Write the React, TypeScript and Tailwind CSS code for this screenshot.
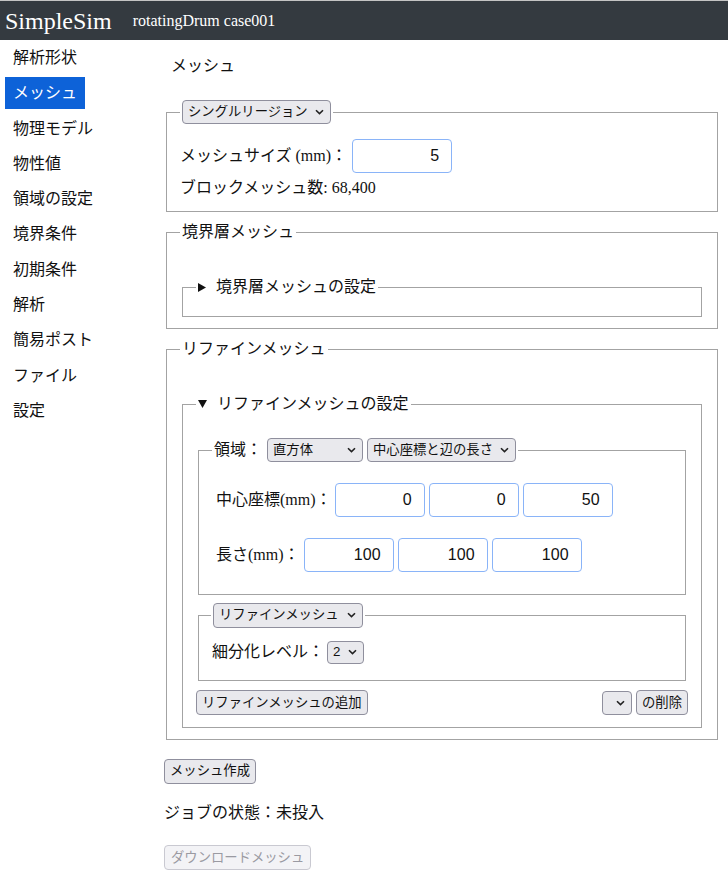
import React from 'react';

const serif = "font-['Liberation_Serif','Noto_Sans_CJK_JP',serif]";
const ctl = "font-['Liberation_Sans','Noto_Sans_CJK_JP',sans-serif] text-[13.33px] text-[#111]";

const navItems = ['解析形状', 'メッシュ', '物理モデル', '物性値', '領域の設定', '境界条件', '初期条件', '解析', '簡易ポスト', 'ファイル', '設定'];

function Chevron() {
  return (
    <svg width="9" height="6" viewBox="0 0 9 6" className="pointer-events-none absolute right-[7px] top-1/2 -translate-y-1/2">
      <path d="M1 1.2 L4.5 4.6 L8 1.2" fill="none" stroke="#222" strokeWidth="1.6" />
    </svg>
  );
}

function Select({ width, value, height = 'h-6' }: { width: string; value: string; height?: string }) {
  return (
    <span className="relative inline-flex align-middle">
      <select
        defaultValue={value}
        className={`${ctl} ${width} ${height} appearance-none rounded-[4px] border border-[#8f8f9d] bg-[#e9e9ed] pl-[5px] pr-5 leading-none outline-none`}
      >
        <option value={value}>{value}</option>
      </select>
      <Chevron />
    </span>
  );
}

function Btn({ children, disabled = false }: { children: React.ReactNode; disabled?: boolean }) {
  return (
    <button
      disabled={disabled}
      className={
        disabled
          ? `${ctl} h-[25px] rounded-[4px] border border-[#c9c9d1] bg-[#f3f3f6] px-[6px] !text-[#9a9aa2]`
          : `${ctl} h-[25px] rounded-[4px] border border-[#8f8f9d] bg-[#e9e9ed] px-[5px]`
      }
    >
      {children}
    </button>
  );
}

function NumInput({ value, width }: { value: string; width: string }) {
  return (
    <input
      readOnly
      value={value}
      className={`${width} h-[34px] rounded-[4px] border border-[#8ab4f8] bg-white pr-3 text-right font-['Liberation_Sans',sans-serif] text-[16px] text-[#111] outline-none`}
    />
  );
}

function Triangle({ open }: { open: boolean }) {
  return open ? (
    <svg width="9" height="8" viewBox="0 0 9 8" className="mr-[10px] inline-block">
      <path d="M0 0 H9 L4.5 8 Z" fill="#111" />
    </svg>
  ) : (
    <svg width="8" height="9" viewBox="0 0 8 9" className="mr-[10px] inline-block">
      <path d="M0 0 V9 L8 4.5 Z" fill="#111" />
    </svg>
  );
}

const fs = 'mx-[2px] border border-[#a3a3a3] px-[13px] pt-0 min-w-0';
const lg = 'px-[2px] h-6 leading-6 flex items-center';

export default function App() {
  return (
    <div className={`${serif} min-h-[883px] w-[728px] bg-white text-[16px] text-[#111]`}>
      {/* header */}
      <div className="flex h-10 items-center border-t border-[#c4c4c4] bg-[#343a40] text-white">
        <span className="ml-[5px] text-[24px] leading-none">SimpleSim</span>
        <span className="ml-[21px] text-[16px] leading-none">rotatingDrum case001</span>
      </div>

      <div className="flex">
        {/* sidebar */}
        <nav className="flex w-[164px] shrink-0 flex-col gap-[3.3px] pt-[2px]">
          {navItems.map((item) => (
            <div key={item} className="h-8 pl-[5px]">
              <span
                className={
                  item === 'メッシュ'
                    ? 'flex h-8 w-20 items-center bg-[#0d62d8] px-2 text-white'
                    : 'flex h-8 items-center px-2'
                }
              >
                {item}
              </span>
            </div>
          ))}
        </nav>

        {/* main */}
        <main className="min-w-0 flex-1 pr-2 pt-[14px]">
          <div className="h-6 pl-[7px] leading-6">メッシュ</div>

          {/* single region */}
          <fieldset className={`${fs} mt-[22px] pb-[11px]`}>
            <legend className={lg}>
              <Select width="w-[149px]" value="シングルリージョン" />
            </legend>
            <div className="mt-[15px] flex h-[34px] items-center gap-[5px]">
              <span>
                メッシュサイズ (mm)：
              </span>
              <NumInput value="5" width="w-[100px]" />
            </div>
            <div className="mt-[3px] h-6 leading-6">ブロックメッシュ数: 68,400</div>
          </fieldset>

          {/* boundary layer */}
          <fieldset className={`${fs} mt-2 pb-[11px]`}>
            <legend className={lg}>境界層メッシュ</legend>
            <fieldset className={`${fs} mt-[31px] pb-[17px]`}>
              <legend className={lg}>
                <Triangle open={false} />
                境界層メッシュの設定
              </legend>
            </fieldset>
          </fieldset>

          {/* refine */}
          <fieldset className={`${fs} mt-2 pb-[11px]`}>
            <legend className={lg}>リファインメッシュ</legend>
            <fieldset className={`${fs} mt-[31px] pb-[12px]`}>
              <legend className={lg}>
                <Triangle open />
                リファインメッシュの設定
              </legend>

              <fieldset className={`${fs} mt-[22px] pb-[22px]`}>
                <legend className={`${lg} gap-[4px]`}>
                  <span className="mr-[1px]">領域：</span>
                  <Select width="w-[96px]" value="直方体" />
                  <Select width="w-[149px]" value="中心座標と辺の長さ" />
                </legend>
                <div className="mt-[21px] flex h-[34px] items-center pl-[4px]">
                  <span className="mr-[3px]">中心座標(mm)：</span>
                  <div className="flex gap-1">
                    <NumInput value="0" width="w-[90px]" />
                    <NumInput value="0" width="w-[90px]" />
                    <NumInput value="50" width="w-[90px]" />
                  </div>
                </div>
                <div className="mt-[21px] flex h-[34px] items-center pl-[4px]">
                  <span className="mr-[4px]">長さ(mm)：</span>
                  <div className="flex gap-1">
                    <NumInput value="100" width="w-[90px]" />
                    <NumInput value="100" width="w-[90px]" />
                    <NumInput value="100" width="w-[90px]" />
                  </div>
                </div>
              </fieldset>

              <fieldset className={`${fs} mt-2 pb-[16px]`}>
                <legend className={`${lg} -ml-[1px]`}>
                  <Select width="w-[150px]" value="リファインメッシュ" height="h-[25px]" />
                </legend>
                <div className="mt-[13px] flex h-6 items-center">
                  <span className="mr-[3px]">細分化レベル：</span>
                  <Select width="w-[37px]" value="2" height="h-[23px]" />
                </div>
              </fieldset>

              <div className="mt-[9px] flex items-center justify-between">
                <Btn>リファインメッシュの追加</Btn>
                <div className="flex items-center gap-1">
                  <Select width="w-[30px]" value="" />
                  <Btn>の削除</Btn>
                </div>
              </div>
            </fieldset>
          </fieldset>

          <div className="mt-[18px]">
            <Btn>メッシュ作成</Btn>
          </div>
          <div className="mt-[17px] h-6 leading-6">ジョブの状態：未投入</div>
          <div className="mt-[20px]">
            <Btn disabled>ダウンロードメッシュ</Btn>
          </div>
        </main>
      </div>
    </div>
  );
}
